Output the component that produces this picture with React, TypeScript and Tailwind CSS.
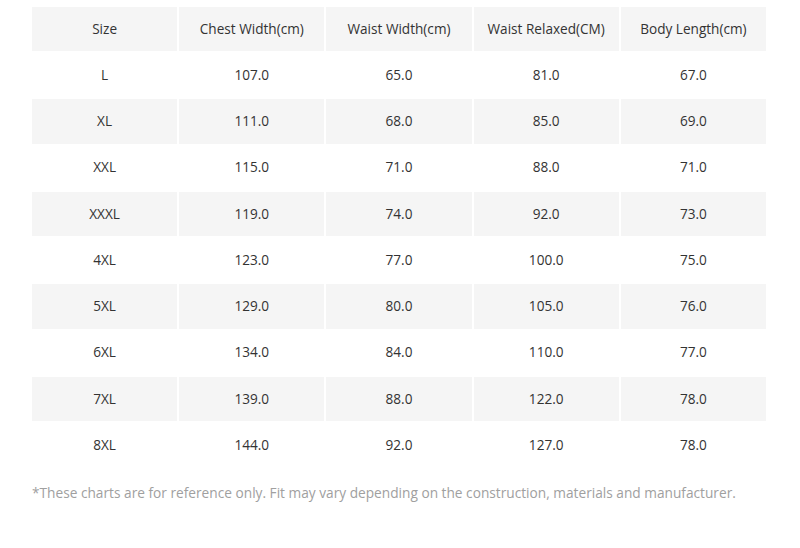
const headers = ["Size", "Chest Width(cm)", "Waist Width(cm)", "Waist Relaxed(CM)", "Body Length(cm)"];

const rows = [
  ["L", "107.0", "65.0", "81.0", "67.0"],
  ["XL", "111.0", "68.0", "85.0", "69.0"],
  ["XXL", "115.0", "71.0", "88.0", "71.0"],
  ["XXXL", "119.0", "74.0", "92.0", "73.0"],
  ["4XL", "123.0", "77.0", "100.0", "75.0"],
  ["5XL", "129.0", "80.0", "105.0", "76.0"],
  ["6XL", "134.0", "84.0", "110.0", "77.0"],
  ["7XL", "139.0", "88.0", "122.0", "78.0"],
  ["8XL", "144.0", "92.0", "127.0", "78.0"],
];

export default function App() {
  return (
    <div className="h-[548px] w-[800px] bg-white pt-[7px] pl-[32px] font-['Open_Sans',sans-serif]">
      <div className="grid w-[734px] grid-cols-5 gap-[2px] text-[13.6px] text-[#333]">
        {headers.map((h) => (
          <div key={h} className="flex h-[44px] items-center justify-center bg-[#f5f5f5]">
            {h}
          </div>
        ))}
        {rows.map((row, i) =>
          row.map((cell, j) => (
            <div
              key={`${i}-${j}`}
              className={`flex h-[44.25px] items-center justify-center ${i % 2 === 1 ? "bg-[#f5f5f5]" : "bg-white"}`}
            >
              {cell}
            </div>
          ))
        )}
      </div>
      <p className="mt-[16px] text-[13.7px] text-[#a0a0a0]">
        *These charts are for reference only. Fit may vary depending on the construction, materials and manufacturer.
      </p>
    </div>
  );
}
